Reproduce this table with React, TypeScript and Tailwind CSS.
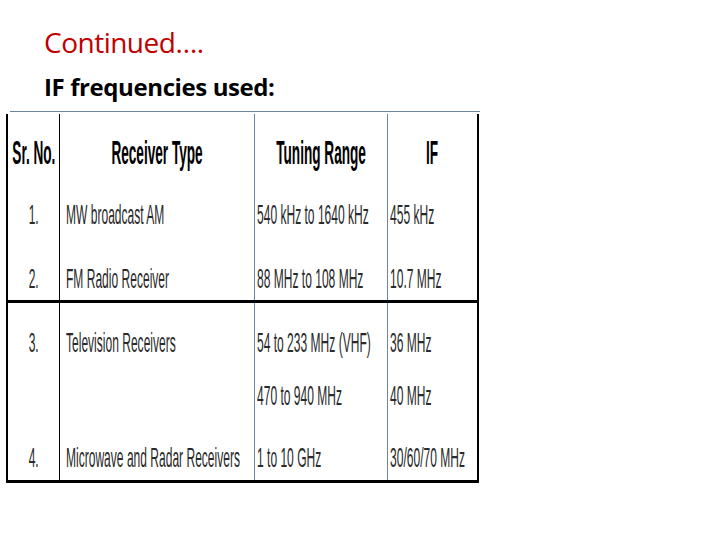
import React from "react";

// Squeezed table text, like the scanned slide table
const Txt = ({ children, bold = false, center = false }: { children: React.ReactNode; bold?: boolean; center?: boolean }) => (
  <span
    className={`inline-block whitespace-nowrap leading-none ${center ? "origin-center" : "origin-left"} ${bold ? "font-bold text-[34px] scale-x-[0.4] text-black" : "text-[28px] scale-x-[0.43] text-[#2a2a2a]"}`}
    style={{ fontFamily: '"Liberation Sans", Arial, sans-serif' }}
  >
    {children}
  </span>
);

type Row = { h: string; pt: string; cells: string[] };

const rowsTop: Row[] = [
  { h: "h-[63px]", pt: "pt-[17px]", cells: ["1.", "MW broadcast AM", "540 kHz to 1640 kHz", "455 kHz"] },
  { h: "h-[53px]", pt: "pt-[18px]", cells: ["2.", "FM Radio Receiver", "88 MHz to 108 MHz", "10.7 MHz"] },
];

const rowsBottom: Row[] = [
  { h: "h-[66px]", pt: "pt-[26px]", cells: ["3.", "Television Receivers", "54 to 233 MHz (VHF)", "36 MHz"] },
  { h: "h-[54px]", pt: "pt-[13px]", cells: ["", "", "470 to 940 MHz", "40 MHz"] },
  { h: "h-[57px]", pt: "pt-[21px]", cells: ["4.", "Microwave and Radar Receivers", "1 to 10 GHz", "30/60/70 MHz"] },
];

const cols = "grid grid-cols-[52px_195px_133px_89px]";

function TableRow({ row }: { row: Row }) {
  return (
    <div className={`${cols} ${row.h}`}>
      <div className={`flex justify-center ${row.pt} border-r border-black`}>
        <Txt center>{row.cells[0]}</Txt>
      </div>
      <div className={`pl-[6px] ${row.pt} border-r border-[#6b86a3]`}>
        <Txt>{row.cells[1]}</Txt>
      </div>
      <div className={`pl-[2px] ${row.pt} border-r border-[#6b86a3]`}>
        <Txt>{row.cells[2]}</Txt>
      </div>
      <div className={`pl-[2px] ${row.pt}`}>
        <Txt>{row.cells[3]}</Txt>
      </div>
    </div>
  );
}

export default function App() {
  return (
    <div className="w-[720px] h-[540px] bg-white overflow-hidden">
      <div className="pl-[44px] pt-[26px]" style={{ fontFamily: '"Open Sans", "Noto Sans", sans-serif' }}>
        <h1 className="text-[28px] leading-[32px] text-[#c00000] tracking-[-0.5px]">Continued….</h1>
        <h2 className="mt-[15px] text-[24px] leading-[28px] font-bold text-black tracking-[-0.4px]">IF frequencies used:</h2>
      </div>

      {/* table */}
      <div className="mt-[10px] ml-[10px] w-[470px] border-t border-[#6b86a3]" />
      <div className="ml-[6px] mt-[2px] w-[473px] border-l-2 border-r-2 border-b-[3px] border-black">
        {/* header */}
        <div className={`${cols} h-[70px]`}>
          <div className="flex justify-center pt-[21px] border-r border-black">
            <Txt bold center>Sr. No.</Txt>
          </div>
          <div className="flex justify-center pt-[21px] border-r border-[#6b86a3]">
            <Txt bold center>Receiver Type</Txt>
          </div>
          <div className="flex justify-center pt-[21px] border-r border-[#6b86a3]">
            <Txt bold center>Tuning Range</Txt>
          </div>
          <div className="flex justify-center pt-[21px]">
            <Txt bold center>IF</Txt>
          </div>
        </div>
        {rowsTop.map((r, i) => (
          <TableRow key={i} row={r} />
        ))}
        <div className="border-t-[3px] border-black" />
        {rowsBottom.map((r, i) => (
          <TableRow key={i} row={r} />
        ))}
      </div>
    </div>
  );
}
